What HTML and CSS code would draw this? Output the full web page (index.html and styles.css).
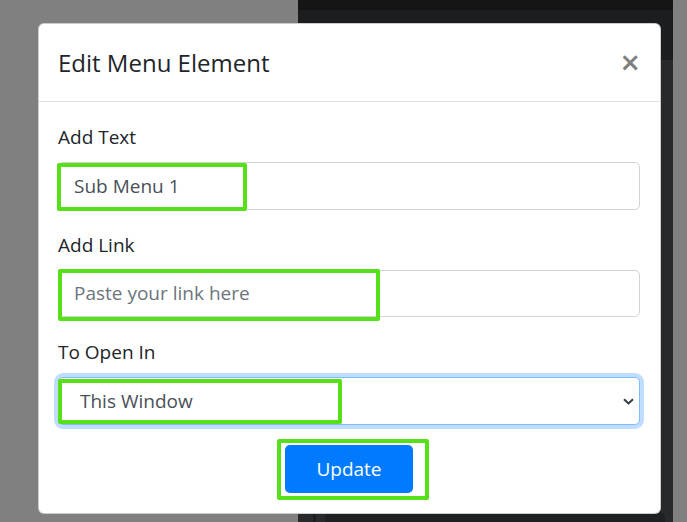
FILE: index.html
```html
<!DOCTYPE html>
<html lang="en">
<head>
<meta charset="utf-8">
<title>Edit Menu Element</title>
<link rel="stylesheet" href="styles.css">
</head>
<body>
<div class="scene">
  <div class="bg-left"></div>
  <div class="bg-dark">
    <div class="dark-top"></div>
    <div class="dark-bar"></div>
    <div class="dark-rest">
      <div class="dark-line"></div>
      <div class="dark-box"></div>
    </div>
  </div>
  <div class="bg-right"></div>
</div>

<div class="modal">
  <div class="modal-header">
    <h5 class="modal-title">Edit Menu Element</h5>
    <button class="close" type="button">&times;</button>
  </div>
  <div class="modal-body">
    <div class="form-group">
      <label class="label">Add Text</label>
      <div class="field">
        <input class="form-control" type="text" value="Sub Menu 1">
        <span class="mark mark-1"></span>
      </div>
    </div>
    <div class="form-group">
      <label class="label">Add Link</label>
      <div class="field">
        <input class="form-control" type="text" placeholder="Paste your link here">
        <span class="mark mark-2"></span>
      </div>
    </div>
    <div class="form-group">
      <label class="label">To Open In</label>
      <div class="field">
        <select class="form-control select">
          <option>This Window</option>
          <option>New Window</option>
        </select>
        <svg class="chevron" width="11" height="7" viewBox="0 0 11 7"><path d="M1 1.2 L5.5 5.4 L10 1.2" fill="none" stroke="#343a40" stroke-width="2"/></svg>
        <span class="mark mark-3"></span>
      </div>
    </div>
    <div class="actions">
      <div class="field">
        <button class="btn" type="button">Update</button>
        <span class="mark mark-4"></span>
      </div>
    </div>
  </div>
</div>
</body>
</html>
```

FILE: styles.css
```css
* { box-sizing: border-box; }
html, body {
  margin: 0;
  padding: 0;
  width: 687px;
  height: 522px;
  overflow: hidden;
  font-family: "Open Sans", "Noto Sans", "Liberation Sans", sans-serif;
}
body { position: relative; background: #808080; }

.scene {
  display: flex;
  width: 687px;
  height: 522px;
}
.bg-left { width: 298px; background: #808080; }
.bg-dark {
  width: 375px;
  display: flex;
  flex-direction: column;
}
.dark-top { height: 10px; background: #151516; }
.dark-bar { height: 50px; background: #1c1d1f; }
.dark-rest {
  flex: 1;
  background: #28292b;
  position: relative;
}
.dark-line {
  position: absolute;
  left: 15px;
  top: 0;
  bottom: 0;
  width: 3px;
  background: #1d1e20;
}
.dark-box {
  position: absolute;
  left: 27px;
  top: 452px;
  width: 340px;
  height: 30px;
  background: #1f2022;
  border-radius: 6px;
}
.bg-right { flex: 1; background: #808080; }

.modal {
  position: absolute;
  left: 38px;
  top: 23px;
  width: 623px;
  background: #fff;
  border: 1px solid rgba(0, 0, 0, 0.2);
  border-radius: 6px;
  color: #212529;
}
.modal-header {
  display: flex;
  justify-content: space-between;
  align-items: flex-start;
  padding: 20px 19px 20px 19px;
  border-bottom: 1px solid #dee2e6;
}
.modal-title {
  margin: 0;
  font-size: 24px;
  font-weight: 500;
  line-height: 37px;
  color: #212529;
}
.close {
  border: 0;
  background: transparent;
  padding: 0 1px;
  margin: 0;
  font-family: "Open Sans", sans-serif;
  font-size: 34px;
  font-weight: 600;
  line-height: 37px;
  color: #7f7f7f;
}
.modal-body {
  padding: 20px 20px 20px 19px;
}
.form-group { margin-bottom: 20px; }
.label {
  display: block;
  font-size: 19px;
  line-height: 30px;
  margin-bottom: 10px;
  color: #212529;
}
.field { position: relative; }
.form-control {
  display: block;
  width: 100%;
  height: 47.5px;
  padding: 7px 15px;
  font-family: "Open Sans", sans-serif;
  font-size: 19px;
  line-height: 30px;
  color: #495057;
  background: #fff;
  border: 1px solid #ced4da;
  border-radius: 5px;
  outline: none;
}
.form-control::placeholder { color: #6c757d; opacity: 1; }
.select {
  appearance: none;
  -webkit-appearance: none;
  padding-left: 21px;
  border-color: #80bdff;
  box-shadow: 0 0 0 4px rgba(0, 123, 255, 0.25);
}
.chevron {
  position: absolute;
  right: 6px;
  top: 21px;
}
.actions {
  display: flex;
  justify-content: center;
}
.btn {
  display: block;
  width: 128px;
  height: 48px;
  border: 0;
  border-radius: 5px;
  background: #007bff;
  color: #fff;
  font-family: "Open Sans", sans-serif;
  font-size: 19px;
  line-height: 30px;
}
.mark {
  position: absolute;
  border: 4px solid #57df17;
  border-radius: 2px;
  pointer-events: none;
}
.mark-1 { left: -1px; top: 1px; width: 190px; height: 48px; }
.mark-2 { left: 0; top: -1px; width: 322px; height: 52px; }
.mark-3 { left: 0; top: 2px; width: 284px; height: 45px; }
.mark-4 { left: -8px; top: -6px; width: 152px; height: 61px; }
```
